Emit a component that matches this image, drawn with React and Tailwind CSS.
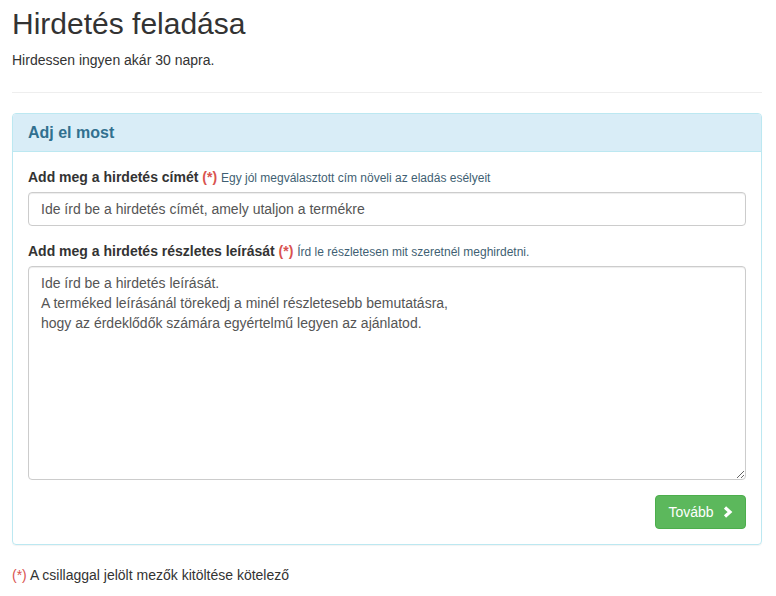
import React from 'react';

const Star = ({ bold }) => <span className={bold ? 'text-[#d9534f] font-bold' : 'text-[#d9534f] font-normal'}>(*)</span>;

const App = () => {
  return (
    <div className="min-h-screen bg-white text-[#333] text-[14px] leading-[20px]" style={{ fontFamily: '"Liberation Sans", Arial, sans-serif' }}>
      <div className="w-[750px] ml-[12px] pt-[7px]">
        {/* Fejléc */}
        <h2 className="text-[30px] leading-[33px] font-normal">Hirdetés feladása</h2>
        <p className="mt-[10px]">Hirdessen ingyen akár 30 napra.</p>
        <hr className="mt-[22px] mb-[20px] border-0 border-t border-[#eee]" />

        {/* Panel */}
        <div className="border border-[#bce8f1] rounded-[4px] shadow-[0_1px_1px_rgba(0,0,0,0.05)]">
          <div className="bg-[#d9edf7] border-b border-[#bce8f1] rounded-t-[3px] px-[15px] py-[10px]">
            <h3 className="text-[16px] leading-[17px] font-bold text-[#31708f]">Adj el most</h3>
          </div>
          <div className="p-[15px]">
            <div className="mb-[15px]">
              <label className="block h-[20px] mb-[5px] font-bold">
                Add meg a hirdetés címét <Star bold />{' '}
                <span className="text-[12px] leading-none font-normal text-[#3f5f73]">Egy jól megválasztott cím növeli az eladás esélyeit</span>
              </label>
              <input
                type="text"
                placeholder="Ide írd be a hirdetés címét, amely utaljon a termékre"
                className="block w-full h-[34px] px-[12px] py-[6px] border border-[#ccc] rounded-[4px] text-[#555] placeholder:text-[#555] shadow-[inset_0_1px_1px_rgba(0,0,0,0.075)] outline-none"
              />
            </div>
            <div className="mb-[15px]">
              <label className="block h-[20px] mb-[5px] font-bold">
                Add meg a hirdetés részletes leírását <Star bold />{' '}
                <span className="text-[12px] leading-none font-normal text-[#3f5f73]">Írd le részletesen mit szeretnél meghirdetni.</span>
              </label>
              <textarea
                rows={10}
                placeholder={'Ide írd be a hirdetés leírását.\nA terméked leírásánál törekedj a minél részletesebb bemutatásra,\nhogy az érdeklődők számára egyértelmű legyen az ajánlatod.'}
                className="block w-full h-[214px] px-[12px] py-[6px] border border-[#ccc] rounded-[4px] text-[#555] placeholder:text-[#555] leading-[20px] shadow-[inset_0_1px_1px_rgba(0,0,0,0.075)] outline-none"
              />
            </div>
            <div className="flex justify-end">
              <button
                type="button"
                className="flex items-center gap-[8px] h-[34px] w-[91px] justify-center bg-[#5cb85c] border border-[#4cae4c] rounded-[4px] text-white"
              >
                Tovább
                <svg width="11" height="12" viewBox="0 0 11 12">
                  <polyline points="3,1.5 8,6 3,10.5" fill="none" stroke="white" strokeWidth="3.2" strokeLinejoin="miter" strokeLinecap="butt" />
                </svg>
              </button>
            </div>
          </div>
        </div>

        {/* Lábléc */}
        <p className="mt-[20px]">
          <Star /> A csillaggal jelölt mezők kitöltése kötelező
        </p>
      </div>
    </div>
  );
};

export default App;
